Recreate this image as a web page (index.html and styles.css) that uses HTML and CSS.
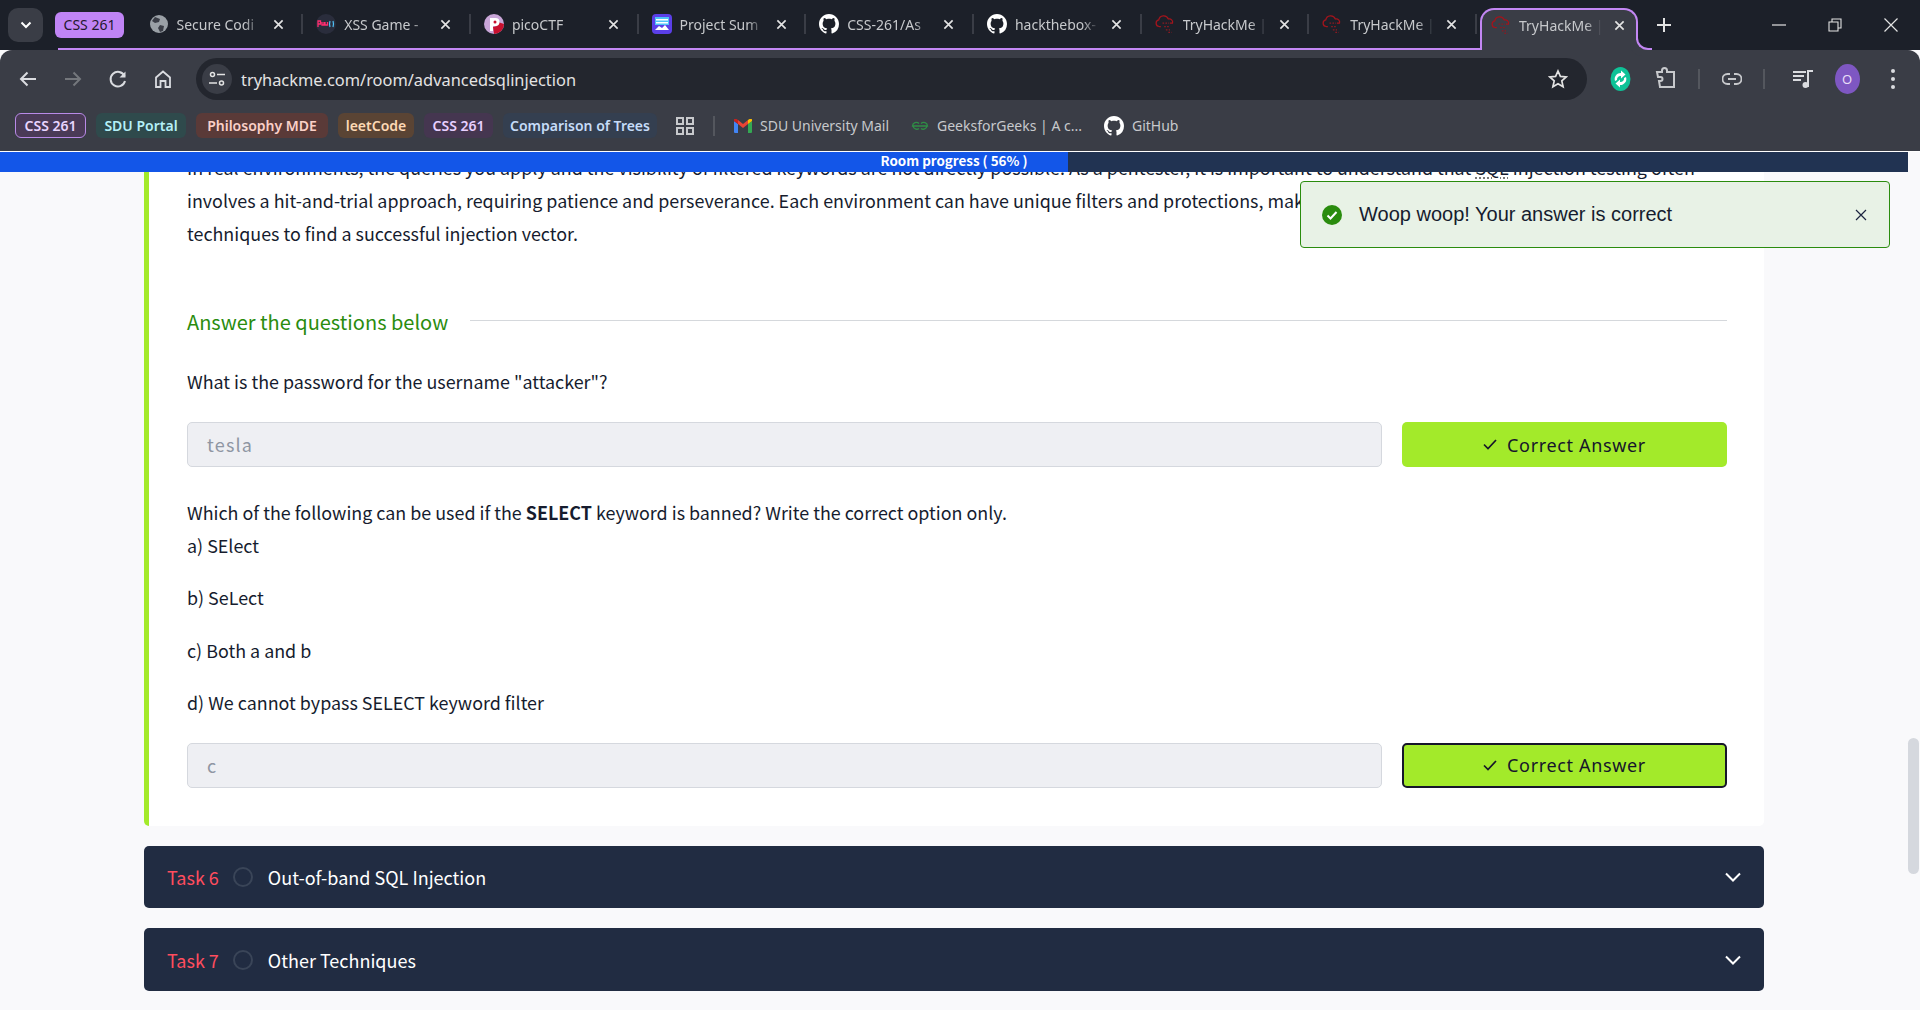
FILE: index.html
```html
<!DOCTYPE html>
<html lang="en">
<head>
    <meta charset="UTF-8">
    <meta name="viewport" content="width=device-width, initial-scale=1.0">
    <title>TryHackMe | Advanced SQL Injection</title>
    <link rel="stylesheet" href="styles.css">
</head>
<body>
    <svg class="sprites" width="0" height="0">
        <symbol id="gh" viewBox="0 0 16 16"><path fill="#fff" d="M8 0C3.58 0 0 3.58 0 8c0 3.54 2.29 6.53 5.47 7.59.4.07.55-.17.55-.38 0-.19-.01-.82-.01-1.49-2.01.37-2.53-.49-2.69-.94-.09-.23-.48-.94-.82-1.13-.28-.15-.68-.52-.01-.53.63-.01 1.08.58 1.23.82.72 1.21 1.87.87 2.33.66.07-.52.28-.87.51-1.07-1.78-.2-3.64-.89-3.64-3.95 0-.87.31-1.59.82-2.15-.08-.2-.36-1.02.08-2.12 0 0 .67-.21 2.2.82.64-.18 1.32-.27 2-.27.68 0 1.36.09 2 .27 1.53-1.04 2.2-.82 2.2-.82.44 1.1.16 1.92.08 2.12.51.56.82 1.27.82 2.15 0 3.07-1.87 3.75-3.65 3.95.29.25.54.73.54 1.48 0 1.07-.01 1.93-.01 2.2 0 .21.15.46.55.38A8.013 8.013 0 0016 8c0-4.42-3.58-8-8-8z"/></symbol>
        <symbol id="thm" viewBox="0 0 24 24"><path fill="none" stroke="#a3141c" stroke-width="1.5" d="M7 15H5a4 4 0 0 1-.5-7.9A6 6 0 0 1 16 6a4 4 0 0 1 5 5h-3"/><path fill="none" stroke="#8a1a22" stroke-width="1.5" stroke-dasharray="2 1.5" d="M9 11h8M11 15h6M13 19h5M16 22h4"/></symbol>
        <symbol id="close" viewBox="0 0 12 12"><path fill="none" stroke="currentColor" stroke-width="1.8" d="M1.5 1.5l9 9M10.5 1.5l-9 9"/></symbol>
    </svg>

    <!-- browser chrome -->
    <div class="tabstrip">
        <button class="tab-search"><svg width="12" height="8" viewBox="0 0 12 8"><path fill="none" stroke="#fff" stroke-width="2" d="M1.5 1.5L6 6l4.5-4.5"/></svg></button>
        <div class="tab-group">
            <span class="group-chip">CSS 261</span>
            <div class="tab">
                <svg class="favicon" viewBox="0 0 20 20"><circle cx="10" cy="10" r="9" fill="#9aa0a6"/><path fill="#3a3d46" d="M6 3l5 2-1 3-4 1-3-2zM11 11l4 1-1 5-3 1-2-4z"/></svg>
                <span class="tab-title">Secure Codi</span>
                <svg class="tab-x"><use href="#close"/></svg>
            </div>
            <div class="tab">
                <svg class="favicon" viewBox="0 0 20 20"><circle cx="10" cy="10" r="10" fill="#2a2d3c"/><path fill="none" stroke="#ff2d6f" stroke-width="1.3" d="M2 13V7h2.500v3H2M6 8v3h2V8M9 8v3h2.500V8"/><path fill="none" stroke="#4fc3f7" stroke-width="1.2" d="M14 7q-1 3 0 6M17 7q1 3 0 6"/></svg>
                <span class="tab-title">XSS Game -</span>
                <svg class="tab-x"><use href="#close"/></svg>
            </div>
            <div class="tab">
                <svg class="favicon" viewBox="0 0 20 20"><circle cx="10" cy="10" r="10" fill="#c9a6d8"/><path fill="#c8102e" d="M10 20a10 10 0 0 0 10-10l-6-2-1 4-4 1z"/><path fill="#fff" d="M6 4h5.500a4 4 0 0 1 0 8H9v5H6z"/><circle cx="11" cy="8" r="1.500" fill="#c8102e"/></svg>
                <span class="tab-title">picoCTF</span>
                <svg class="tab-x"><use href="#close"/></svg>
            </div>
            <div class="tab">
                <svg class="favicon" viewBox="0 0 20 20"><rect width="20" height="20" rx="4" fill="#5b3fe8"/><path fill="#4fc3f7" d="M3 3h14v8H3z"/><path fill="#fff" d="M4 5h12v1.500H4zM4 8h12v1.500H4zM3 16l4-4 3 2 3-3 4 5z"/></svg>
                <span class="tab-title">Project Sum</span>
                <svg class="tab-x"><use href="#close"/></svg>
            </div>
            <div class="tab">
                <svg class="favicon"><use href="#gh"/></svg>
                <span class="tab-title">CSS-261/As</span>
                <svg class="tab-x"><use href="#close"/></svg>
            </div>
            <div class="tab">
                <svg class="favicon"><use href="#gh"/></svg>
                <span class="tab-title">hackthebox-</span>
                <svg class="tab-x"><use href="#close"/></svg>
            </div>
            <div class="tab">
                <svg class="favicon"><use href="#thm"/></svg>
                <span class="tab-title">TryHackMe |</span>
                <svg class="tab-x"><use href="#close"/></svg>
            </div>
            <div class="tab">
                <svg class="favicon"><use href="#thm"/></svg>
                <span class="tab-title">TryHackMe |</span>
                <svg class="tab-x"><use href="#close"/></svg>
            </div>
            <div class="tab tab-active">
                <svg class="favicon"><use href="#thm"/></svg>
                <span class="tab-title">TryHackMe |</span>
                <svg class="tab-x"><use href="#close"/></svg>
            </div>
        </div>
        <svg class="new-tab" width="14" height="14" viewBox="0 0 14 14"><path fill="none" stroke="#e3e3e3" stroke-width="2" d="M7 0v14M0 7h14"/></svg>
        <div class="win-controls">
            <svg width="14" height="14" viewBox="0 0 14 14"><path stroke="#e3e3e3" stroke-width="1.200" d="M0 7h14"/></svg>
            <svg width="14" height="14" viewBox="0 0 14 14"><path fill="none" stroke="#e3e3e3" stroke-width="1.100" d="M1 4h9v9H1zM4 4V1h9v9h-3"/></svg>
            <svg width="14" height="14" viewBox="0 0 14 14"><path stroke="#e3e3e3" stroke-width="1.200" d="M.5.500l13 13M13.500.500l-13 13"/></svg>
        </div>
    </div>

    <div class="toolbar">
        <svg class="tool-icon" viewBox="0 0 20 20"><path fill="none" stroke="#dadce0" stroke-width="2" d="M18 10H3M9.500 3.500L3 10l6.500 6.500"/></svg>
        <svg class="tool-icon" viewBox="0 0 20 20"><path fill="none" stroke="#74777c" stroke-width="2" d="M2 10h15M10.500 3.500L17 10l-6.500 6.500"/></svg>
        <svg class="tool-icon" viewBox="0 0 20 20"><path fill="none" stroke="#dadce0" stroke-width="2" d="M16.500 7A7.300 7.300 0 1 0 17 12"/><path fill="#dadce0" d="M17.500 2.500v6h-6z"/></svg>
        <svg class="tool-icon" viewBox="0 0 20 20"><path fill="none" stroke="#dadce0" stroke-width="1.800" d="M3 8.500L10 2.500l7 6V18h-4.500v-6h-5v6H3z"/></svg>
        <div class="omnibox">
            <span class="site-info">
                <svg width="16" height="16" viewBox="0 0 16 16"><g fill="none" stroke="#e3e3e3" stroke-width="1.500"><circle cx="3.500" cy="3.500" r="2"/><path d="M8 3.500h8M0 12h8"/><circle cx="12.500" cy="12" r="2"/></g></svg>
            </span>
            <span class="url">tryhackme.com/room/advancedsqlinjection</span>
            <svg class="star" width="20" height="20" viewBox="0 0 20 20"><path fill="none" stroke="#e3e3e3" stroke-width="1.700" d="M10 2l2.400 5.400 5.800.6-4.400 3.900 1.300 5.800L10 14.700l-5.100 3 1.300-5.800L1.800 8l5.800-.6z"/></svg>
        </div>
        <div class="tool-right">
            <svg class="ext-green" width="21" height="24" viewBox="0 0 21 24"><ellipse cx="10.500" cy="12" rx="10" ry="12" fill="#0ec297"/><path fill="#fff" d="M5 14a6 6 0 0 1 6-8V3.500l4.500 4-4.500 4V9a3.500 3.500 0 0 0-4 4zM16 10a6 6 0 0 1-6 8v2.500l-4.500-4 4.500-4V15a3.500 3.500 0 0 0 4-4z"/></svg>
            <svg class="puzzle" width="22" height="24" viewBox="0 0 22 24"><path fill="none" stroke="#c7c9cc" stroke-width="2" d="M2 5h5V3.500a2.500 2.500 0 0 1 5 0V5h7v15H5l-1-6h1.500a2 2 0 0 0 0-4H3z"/></svg>
            <span class="tool-sep"></span>
            <svg class="link" width="20" height="12" viewBox="0 0 20 12"><path fill="none" stroke="#c7c9cc" stroke-width="1.800" d="M8 1H5.500a5 5 0 0 0 0 10H8M12 1h2.500a5 5 0 0 1 0 10H12M6 6h8"/></svg>
            <span class="tool-sep"></span>
            <svg class="music" width="20" height="18" viewBox="0 0 20 18"><path fill="none" stroke="#dadce0" stroke-width="2" d="M0 2h13M0 6h11M0 10h8M15 17V1h5"/><circle cx="12.500" cy="15" r="3" fill="#dadce0"/></svg>
            <span class="avatar">O</span>
            <svg class="kebab" width="4" height="20" viewBox="0 0 4 20"><g fill="#dadce0"><circle cx="2" cy="2" r="2"/><circle cx="2" cy="10" r="2"/><circle cx="2" cy="18" r="2"/></g></svg>
        </div>
    </div>

    <div class="bookmarks">
        <span class="bm-chip bm-purple-open">CSS 261</span>
        <span class="bm-chip bm-teal">SDU Portal</span>
        <span class="bm-chip bm-red">Philosophy MDE</span>
        <span class="bm-chip bm-orange">leetCode</span>
        <span class="bm-chip bm-purple">CSS 261</span>
        <span class="bm-chip bm-blue">Comparison of Trees</span>
        <svg class="bm-apps" width="18" height="18" viewBox="0 0 18 18"><g fill="none" stroke="#c7c9cc" stroke-width="2"><rect x="1" y="1" width="6" height="6"/><rect x="11" y="1" width="6" height="6"/><rect x="1" y="11" width="6" height="6"/><rect x="11" y="11" width="6" height="6"/></g></svg>
        <span class="bm-sep"></span>
        <span class="bm-link">
            <svg width="18" height="14" viewBox="0 0 18 14"><path fill="#4285f4" d="M0 2l4 3v9H1a1 1 0 0 1-1-1z"/><path fill="#34a853" d="M14 5l4-3v11a1 1 0 0 1-1 1h-3z"/><path fill="#ea4335" d="M4 5V1l5 4 5-4v4L9 9z"/><path fill="#fbbc04" d="M14 1l1.500-1A1.500 1.500 0 0 1 18 1.500V2l-4 3z"/><path fill="#c5221f" d="M0 2v-.500A1.500 1.500 0 0 1 2.500 0L4 1v4z"/></svg>
            SDU University Mail
        </span>
        <span class="bm-link">
            <svg width="18" height="10" viewBox="0 0 18 10"><path fill="none" stroke="#2f8d46" stroke-width="1.300" d="M9 5H1.500A3.800 3.800 0 0 1 8 2.500M9 5h7.500A3.800 3.800 0 0 0 10 2.500M2 5a3.800 3.800 0 0 0 6 2.500M16 5a3.800 3.800 0 0 1-6 2.500"/></svg>
            GeeksforGeeks | A c...
        </span>
        <span class="bm-link">
            <svg width="20" height="20"><use href="#gh"/></svg>
            GitHub
        </span>
    </div>

    <!-- tryhackme page -->
    <div class="page">
        <div class="progress">
            <div class="progress-fill"></div>
            <span class="progress-text">Room progress ( 56% )</span>
        </div>

        <div class="toast">
            <svg width="20" height="20" viewBox="0 0 20 20"><circle cx="10" cy="10" r="10" fill="#2a8c0e"/><path fill="none" stroke="#fff" stroke-width="2" d="M5.500 10.500l3 3 6-6.500"/></svg>
            <span class="toast-text">Woop woop! Your answer is correct</span>
            <svg class="toast-x" width="12" height="12" viewBox="0 0 12 12"><path fill="none" stroke="#1c2440" stroke-width="1.200" d="M1 1l10 10M11 1L1 11"/></svg>
        </div>

        <div class="scroll-thumb"></div>

        <div class="task-card">
            <p class="para">In real environments, the queries you apply and the visibility of filtered keywords are not directly possible. As a pentester, it is important to understand that <abbr>SQL</abbr> injection testing often<br>
            involves a hit-and-trial approach, requiring patience and perseverance. Each environment can have unique filters and protections, making it necessary to adapt<br>
            techniques to find a successful injection vector.</p>

            <div class="answer-head">
                <h4>Answer the questions below</h4>
                <span class="answer-line"></span>
            </div>

            <p class="question q-first">What is the password for the username "attacker"?</p>
            <div class="answer-row">
                <div class="answer-input">tesla</div>
                <button class="answer-btn">
                    <svg width="14" height="11" viewBox="0 0 14 11"><path fill="none" stroke="#16162a" stroke-width="1.700" d="M1 5.500l4 4 8-8.500"/></svg>
                    Correct Answer
                </button>
            </div>

            <p class="question q-second">Which of the following can be used if the <b>SELECT</b> keyword is banned? Write the correct option only.</p>
            <p class="question">a) SElect</p>
            <p class="question q-option">b) SeLect</p>
            <p class="question q-option">c) Both a and b</p>
            <p class="question q-option">d) We cannot bypass SELECT keyword filter</p>
            <div class="answer-row">
                <div class="answer-input">c</div>
                <button class="answer-btn answer-btn-focus">
                    <svg width="14" height="11" viewBox="0 0 14 11"><path fill="none" stroke="#16162a" stroke-width="1.700" d="M1 5.500l4 4 8-8.500"/></svg>
                    Correct Answer
                </button>
            </div>
        </div>

        <div class="task-row">
            <span class="task-num">Task 6</span>
            <span class="task-circle"></span>
            <span class="task-title">Out-of-band SQL Injection</span>
            <svg class="task-chevron" width="16" height="10" viewBox="0 0 16 10"><path fill="none" stroke="#fff" stroke-width="2" d="M1 1.500l7 7 7-7"/></svg>
        </div>
        <div class="task-row task-row-last">
            <span class="task-num">Task 7</span>
            <span class="task-circle"></span>
            <span class="task-title">Other Techniques</span>
            <svg class="task-chevron" width="16" height="10" viewBox="0 0 16 10"><path fill="none" stroke="#fff" stroke-width="2" d="M1 1.500l7 7 7-7"/></svg>
        </div>
    </div>
</body>
</html>
```

FILE: styles.css
```css
* {
    box-sizing: border-box;
    margin: 0;
}

body {
    height: 1010px;
    overflow: hidden;
    background-color: #f9f9fb;
    font-family: "Noto Sans", "Open Sans", sans-serif;
}

.sprites {
    display: block;
    height: 0;
}

/* tab strip */
.tabstrip {
    height: 50px;
    display: flex;
    background-color: #1c2029;
}

.tab-search {
    width: 35px;
    height: 34px;
    margin: 8px 0 0 8px;
    border: 0;
    border-radius: 10px;
    background-color: #3a3d46;
    display: flex;
    align-items: center;
    justify-content: center;
}

.tab-group {
    display: flex;
    margin-left: 15px;
    height: 50px;
    border-bottom: 2px solid #c387f4;
}

.group-chip {
    width: 69px;
    height: 26px;
    margin: 12px 11.5px 0 -3px;
    border-radius: 6px;
    background-color: #c084f5;
    color: #23182e;
    font-size: 14px;
    line-height: 26px;
    text-align: center;
}

.tab {
    width: 167.7px;
    height: 48px;
    display: flex;
    align-items: center;
    padding: 0 16px 0 13px;
    position: relative;
    color: #c7c9cc;
    font-size: 14px;
}

.tab::after {
    content: "";
    position: absolute;
    right: 0;
    top: 14px;
    width: 2px;
    height: 20px;
    background-color: #3a3d46;
}

.favicon {
    width: 20px;
    height: 20px;
    flex: none;
}

.tab-title {
    width: 84px;
    margin-left: 8px;
    white-space: nowrap;
    overflow: hidden;
    -webkit-mask-image: linear-gradient(to right, #000 80%, transparent);
    mask-image: linear-gradient(to right, #000 80%, transparent);
}

.tab-x {
    width: 11px;
    height: 11px;
    margin-left: 12px;
    color: #e3e3e3;
}

.tab-active {
    height: 42px;
    margin-top: 8px;
    margin-bottom: -2px;
    margin-left: 3px;
    width: 158px;
    padding: 0 4px 10px 9px;
    border: 2px solid #c387f4;
    border-bottom: 0;
    border-radius: 14px 14px 0 0;
    background-color: #3a3d46;
}

.tab-active .tab-title {
    width: 83px;
}

.tab-active::after {
    display: none;
}

.tab-active::before {
    content: "";
    position: absolute;
    right: -16px;
    bottom: 0;
    width: 14px;
    height: 14px;
    border-left: 2px solid #c387f4;
    border-bottom: 2px solid #c387f4;
    border-radius: 0 0 0 12px;
    background-color: #1c2029;
    box-shadow: -6px 6px 0 #3a3d46;
}

.new-tab {
    margin: 18px 0 0 19px;
}

.win-controls {
    margin-left: auto;
    display: flex;
    gap: 42px;
    padding: 18px 22px 0 0;
}

/* toolbar */
.toolbar {
    height: 50px;
    display: flex;
    align-items: flex-start;
    padding: 8px 0 0 18px;
    background-color: #3a3d46;
    border-radius: 12px 12px 0 0;
}

.tool-icon {
    width: 20px;
    height: 20px;
    margin: 11px 25px 0 0;
}

.omnibox {
    width: 1391px;
    height: 42px;
    margin-left: -2px;
    padding: 0 19px 0 6px;
    border-radius: 21px;
    background-color: #23262e;
    display: flex;
    align-items: center;
}

.site-info {
    width: 30px;
    height: 30px;
    border-radius: 50%;
    background-color: #3a3d46;
    display: flex;
    align-items: center;
    justify-content: center;
}

.url {
    margin-left: 9px;
    color: #e3e3e3;
    font-size: 16.4px;
}

.star {
    margin-left: auto;
}

.tool-right {
    flex: 1;
    height: 42px;
    display: flex;
    align-items: center;
    padding-left: 23px;
}

.puzzle {
    margin-left: 24px;
}

.tool-sep {
    width: 2px;
    height: 20px;
    background-color: #54575e;
    margin-left: 21px;
}

.link {
    margin-left: 22px;
}

.music {
    margin-left: 27.5px;
}

.avatar {
    width: 25px;
    height: 30px;
    margin-left: 22px;
    border-radius: 50%;
    background-color: #7e57c2;
    color: #e8def8;
    font-size: 13px;
    line-height: 30px;
    text-align: center;
}

.kebab {
    margin-left: 31px;
}

/* bookmarks */
.bookmarks {
    height: 51px;
    display: flex;
    align-items: center;
    padding-left: 15px;
    background-color: #3a3d46;
    font-size: 14px;
}

.bm-chip {
    height: 25px;
    margin-right: 10px;
    border-radius: 6px;
    line-height: 25px;
    font-weight: 600;
    text-align: center;
    white-space: nowrap;
}

.bm-purple-open {
    width: 71px;
    border: 1px solid #b98ae8;
    background-color: #4a3a57;
    color: #e9d5ff;
    line-height: 23px;
}

.bm-teal {
    width: 90px;
    background-color: #2f4a4c;
    color: #b5f0f7;
}

.bm-red {
    width: 132px;
    background-color: #5a3a38;
    color: #fbd0c8;
}

.bm-orange {
    width: 76px;
    background-color: #5a4434;
    color: #fdd9b5;
}

.bm-purple {
    width: 69px;
    background-color: #453650;
    color: #e8d0ff;
}

.bm-blue {
    width: 154px;
    background-color: #343f50;
    color: #c6dcf8;
}

.bm-apps {
    margin-left: 9px;
}

.bm-sep {
    width: 2px;
    height: 20px;
    margin: 0 19px;
    background-color: #54575e;
}

.bm-link {
    display: flex;
    align-items: center;
    gap: 8px;
    margin-right: 22px;
    color: #c7c9cc;
    white-space: nowrap;
}

/* page */
.page {
    position: relative;
    height: 859px;
    overflow: hidden;
    border-top: 1px solid #fff;
    padding-left: 144px;
    font-family: "Noto Sans CJK SC", "Noto Sans", sans-serif;
    color: #161c2e;
}

.progress {
    position: absolute;
    left: 0;
    top: 0;
    width: 1908px;
    height: 20px;
    background-color: #213352;
    color: #fff;
    font-size: 13.4px;
    font-weight: 700;
    line-height: 17px;
    text-align: center;
    z-index: 2;
}

.progress-fill {
    position: absolute;
    left: 0;
    top: 0;
    bottom: 0;
    width: 56%;
    background-color: #1356e8;
}

.progress-text {
    position: relative;
}

.toast {
    position: absolute;
    left: 1300px;
    top: 29px;
    width: 590px;
    height: 67px;
    display: flex;
    align-items: center;
    padding: 0 22px 0 21px;
    border: 1px solid #2a8c0e;
    border-radius: 4px;
    background-color: #e8f2e6;
    z-index: 3;
}

.toast-text {
    margin-left: 17px;
    font-family: "Liberation Sans", sans-serif;
    font-size: 20px;
}

.toast-x {
    margin-left: auto;
}

.scroll-thumb {
    position: absolute;
    left: 1908px;
    top: 586px;
    width: 11px;
    height: 136px;
    border-radius: 6px;
    background-color: #d5d8de;
}

.task-card {
    width: 1620px;
    height: 675px;
    padding: 0 37px 0 38px;
    border-left: 5px solid #a3ea2a;
    border-radius: 5px;
    background-color: #fff;
}

.para,
.question {
    font-size: 17.9px;
    line-height: 33px;
    white-space: nowrap;
}

.para {
    margin-top: -1px;
}

abbr {
    text-decoration: underline dotted #777;
    text-underline-offset: 3px;
}

.answer-head {
    display: flex;
    align-items: center;
    gap: 22px;
    margin-top: 57px;
}

.answer-head h4 {
    font-size: 20px;
    font-weight: 400;
    line-height: 30px;
    color: #2a8c0e;
    white-space: nowrap;
}

.answer-line {
    flex: 1;
    height: 1px;
    margin-top: -3px;
    background-color: #d5d8dc;
}

.q-first {
    margin-top: 28px;
}

.q-second {
    margin-top: 29px;
}

.q-option {
    margin-top: 19.3px;
}

.answer-row {
    display: flex;
    gap: 20px;
    margin-top: 24px;
}

.answer-input {
    width: 1195px;
    height: 45px;
    padding: 0 19px;
    border: 1px solid #d5d8de;
    border-radius: 5px;
    background-color: #eeeff3;
    color: #8f96a3;
    font-size: 18px;
    line-height: 43px;
    letter-spacing: 1.2px;
}

.answer-btn {
    width: 325px;
    height: 45px;
    border: 0;
    border-radius: 5px;
    background-color: #a3ea2a;
    color: #16162a;
    font-family: "Noto Sans", sans-serif;
    font-size: 18px;
    letter-spacing: .65px;
    display: flex;
    align-items: center;
    justify-content: center;
    gap: 10px;
}

.answer-btn-focus {
    border: 2px solid #16162a;
}

.task-row {
    width: 1620px;
    height: 62px;
    margin-top: 20px;
    display: flex;
    align-items: center;
    padding: 0 23px;
    border-radius: 5px;
    background-color: #212c42;
    font-size: 18px;
}

.task-row-last {
    height: 63px;
}

.task-num {
    color: #ff4d5e;
}

.task-circle {
    width: 20px;
    height: 20px;
    margin: 0 15px 0 14px;
    border: 2px solid #3a4558;
    border-radius: 50%;
}

.task-title {
    color: #fff;
}

.task-chevron {
    margin-left: auto;
}
```
